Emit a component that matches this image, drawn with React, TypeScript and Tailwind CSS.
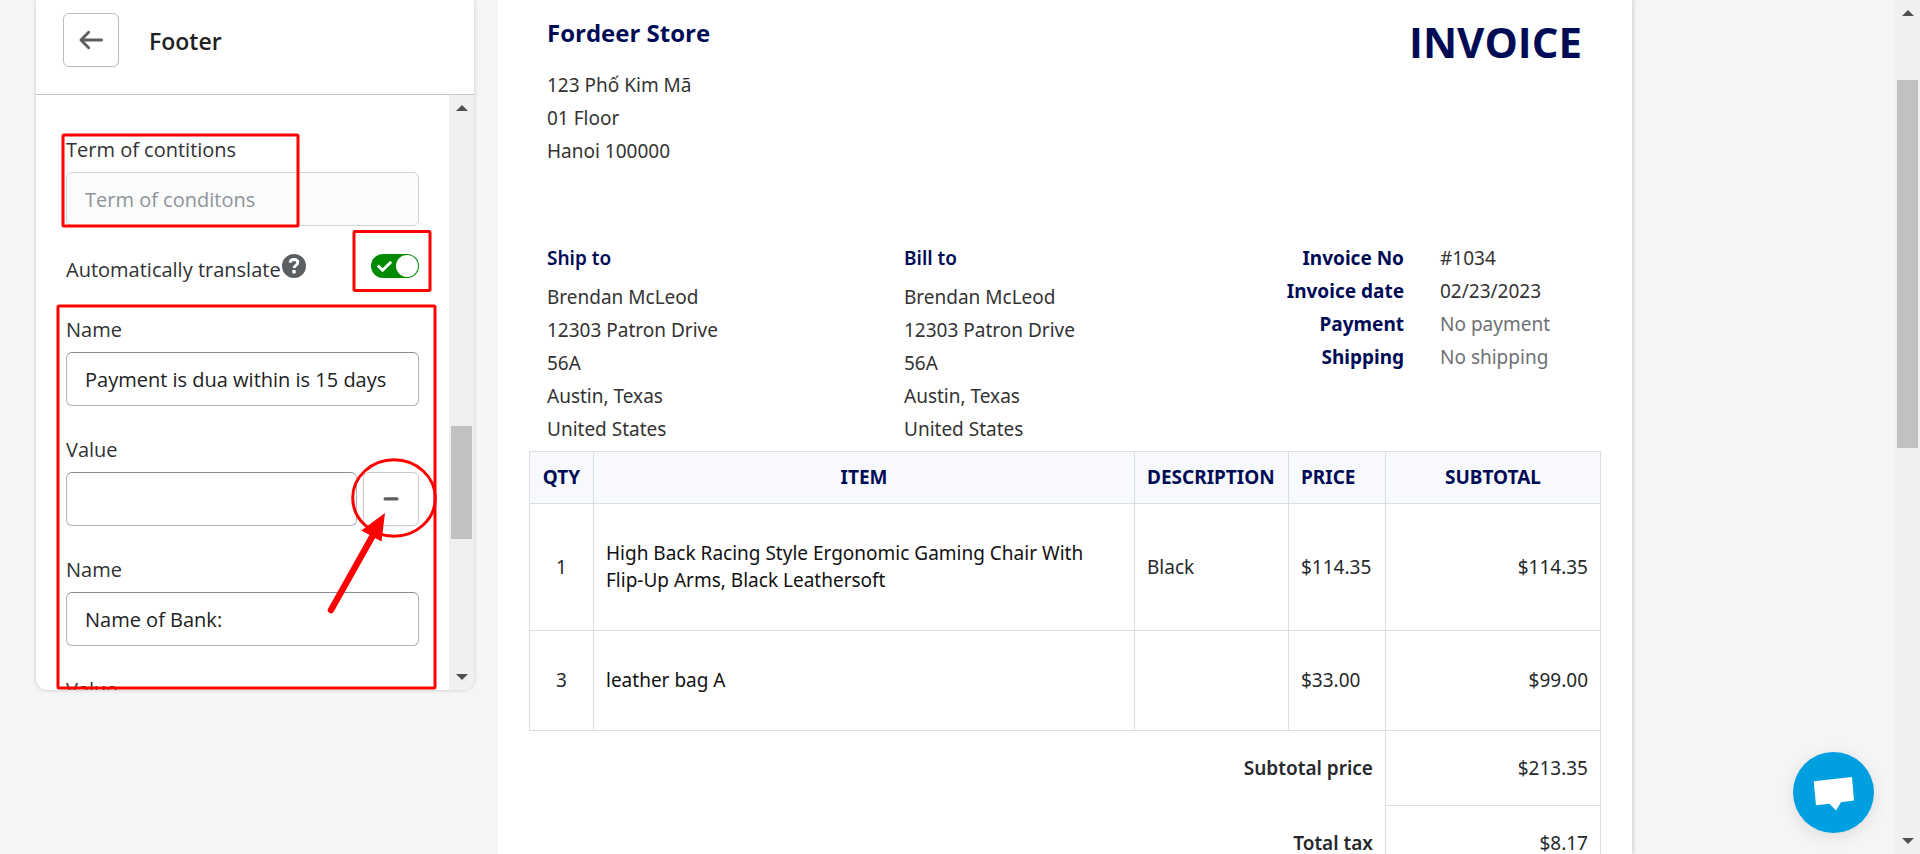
import { useId, useState } from "react";
import { FaCheck } from "react-icons/fa";

const SHIP_LINES = ["Brendan McLeod", "12303 Patron Drive", "56A", "Austin, Texas", "United States"];
const STORE_LINES = ["123 Phố Kim Mã", "01 Floor", "Hanoi 100000"];
const META = [
  { label: "Invoice No", value: "#1034", muted: false },
  { label: "Invoice date", value: "02/23/2023", muted: false },
  { label: "Payment", value: "No payment", muted: true },
  { label: "Shipping", value: "No shipping", muted: true },
];
const ITEMS = [
  {
    qty: "1",
    item: "High Back Racing Style Ergonomic Gaming Chair With Flip-Up Arms, Black Leathersoft",
    description: "Black",
    price: "$114.35",
    subtotal: "$114.35",
    height: "h-[127px]",
  },
  { qty: "3", item: "leather bag A", description: "", price: "$33.00", subtotal: "$99.00", height: "h-[100px]" },
];
const TOTALS = [
  { label: "Subtotal price", value: "$213.35" },
  { label: "Total tax", value: "$8.17" },
];

const INPUT =
  "h-[54px] w-full min-w-0 rounded-md border border-[#aeb4b9] border-t-[#898f94] bg-white px-[18px] text-xl text-[#202223] outline-none";

function ScrollArrow({ down = false }: { down?: boolean }) {
  return (
    <svg viewBox="0 0 12 6" className={down ? "h-[6px] w-3 rotate-180" : "h-[6px] w-3"} aria-hidden="true">
      <path d="M6 0 12 6H0Z" fill="#505050" />
    </svg>
  );
}

function Field({ label, value, removable = false }: { label: string; value: string; removable?: boolean }) {
  const id = useId();
  return (
    <div>
      <label htmlFor={id} className="mb-2 block leading-7">
        {label}
      </label>
      <div className="flex gap-[6px]">
        <input id={id} type="text" defaultValue={value} className={INPUT} />
        {removable && (
          <button
            type="button"
            aria-label="Remove"
            className="flex h-[54px] w-14 shrink-0 items-center justify-center rounded-md border border-[#c9cccf] bg-white shadow-xs"
          >
            <svg viewBox="0 0 16 4" className="h-1 w-4" aria-hidden="true">
              <rect x="0.5" y="0.3" width="15" height="3.2" rx="1.5" fill="#5c5f62" />
            </svg>
          </button>
        )}
      </div>
    </div>
  );
}

function Sidebar() {
  const [translate, setTranslate] = useState(true);
  return (
    <aside className="relative flex h-[calc(100vh-164px)] w-[438px] shrink-0 flex-col overflow-hidden rounded-b-xl bg-white text-xl text-[#303234] shadow-[0_0_4px_rgba(23,24,24,0.2)]">
      <header className="flex items-start border-b border-[#c5c8cb] px-[27px] pt-[13px] pb-[27px]">
        <button
          type="button"
          aria-label="Back"
          className="flex h-[54px] w-14 items-center justify-center rounded-md border border-[#babfc3] bg-white shadow-xs"
        >
          <svg viewBox="0 0 24 20" className="h-5 w-6" fill="none" stroke="#5c5f62" strokeWidth="2.9" strokeLinecap="round" strokeLinejoin="round" aria-hidden="true">
            <path d="M22.5 10H2M9.600 2.300 2 10l7.600 7.700" />
          </svg>
        </button>
        <h2 className="ml-[30px] pt-3 text-[23px] leading-8 font-semibold text-[#202223]">Footer</h2>
      </header>

      <div className="flex min-h-0 flex-1">
        <div className="min-w-0 flex-1 overflow-hidden pt-[41px] pr-[30px] pl-[30px]">
          <label htmlFor="terms" className="mb-2 block leading-7">
            Term of contitions
          </label>
          <input
            id="terms"
            type="text"
            disabled
            placeholder="Term of conditons"
            className="h-[54px] w-full rounded-md border border-[#d2d5d8] bg-[#fafbfb] px-[18px] text-xl placeholder:text-[#8f9499]"
          />
          <div className="flex h-[90px] items-center justify-between pb-[10px]">
            <div className="flex items-center gap-px">
              <label htmlFor="translate" className="pt-[7px] leading-7">
                Automatically translate
              </label>
              <svg viewBox="0 0 24 24" className="h-6 w-6" aria-hidden="true">
                <circle cx="12" cy="12" r="12" fill="#5c5f62" />
                <path d="M8.200 8.700c0-2 1.700-3.200 3.800-3.200s3.800 1.200 3.800 3.100c0 2.600-3.700 2.600-3.700 5.500" fill="none" stroke="#fff" strokeWidth="2.800" />
                <rect x="10.300" y="16" width="3.400" height="3.400" rx="0.600" fill="#fff" />
              </svg>
            </div>
            <label className="relative flex h-6 w-12 cursor-pointer items-center justify-between rounded-full bg-[#008a00] pr-px pl-[6px]">
              <input
                id="translate"
                type="checkbox"
                aria-label="Automatically translate"
                checked={translate}
                onChange={(e) => setTranslate(e.target.checked)}
                className="peer sr-only"
              />
              <FaCheck className="h-[15px] w-[15px] text-white" />
              <span className="h-[22px] w-[22px] rounded-full bg-white" />
            </label>
          </div>
          <div className="flex flex-col gap-[30px]">
            <Field label="Name" value="Payment is dua within is 15 days" />
            <Field label="Value" value="" removable />
            <Field label="Name" value="Name of Bank:" />
            <Field label="Value" value="" removable />
          </div>
        </div>
        <div className="flex w-[25px] shrink-0 flex-col items-center bg-[#f0f0f0] py-[10px]" aria-hidden="true">
          <ScrollArrow />
          <div className="flex min-h-0 w-[21px] flex-1 flex-col">
            <div className="h-[56%]" />
            <div className="h-[113px] bg-[#c1c1c1]" />
          </div>
          <ScrollArrow down />
        </div>
      </div>
    </aside>
  );
}

/** Hand-drawn guide marks laid over the settings panel. */
function Annotations() {
  return (
    <svg className="pointer-events-none absolute top-0 left-0 h-[700px] w-[480px]" viewBox="0 0 480 700" fill="none" stroke="#ff0000" strokeWidth="3" aria-hidden="true">
      <rect x="63" y="135" width="235" height="91" rx="1" />
      <rect x="354" y="231.500" width="76" height="59" rx="1" />
      <rect x="58" y="306" width="377" height="382" rx="1" />
      <ellipse cx="394" cy="498" rx="41.300" ry="38.200" />
      <path d="M331 610 372 537" strokeWidth="6.500" strokeLinecap="round" />
      <path d="M385 513 361.300 530.600 381.500 541.500Z" fill="#ff0000" stroke="none" />
    </svg>
  );
}

function Address({ title }: { title: string }) {
  return (
    <div className="w-[357px] shrink leading-[33px]">
      <h3 className="mb-[6px] font-semibold text-[#000b56]">{title}</h3>
      {SHIP_LINES.map((line) => (
        <p key={line}>{line}</p>
      ))}
    </div>
  );
}

function Invoice() {
  return (
    <main className="min-w-0 max-w-[1134px] flex-1 overflow-hidden bg-white px-[31px] font-['Noto_Sans','Open_Sans',sans-serif] text-[19px] text-[#333] shadow-[2px_0_3px_rgba(23,24,24,0.12)]">
      <div className="flex justify-between pt-[15px] pr-[19px] pl-[18px] font-['Open_Sans','Noto_Sans',sans-serif]">
        <div>
          <h2 className="mb-[18px] text-2xl leading-9 font-bold text-[#000b56]">Fordeer Store</h2>
          {STORE_LINES.map((line) => (
            <p key={line} className="font-['Noto_Sans','Open_Sans',sans-serif] leading-[33px]">
              {line}
            </p>
          ))}
        </div>
        <h1 className="text-[42px] leading-[54px] font-bold text-[#000b56]">INVOICE</h1>
      </div>

      <div className="mt-[74px] flex pl-[18px]">
        <Address title="Ship to" />
        <Address title="Bill to" />
        <dl className="grid flex-1 grid-cols-[143px_1fr] content-start gap-x-9 leading-[33px]">
          {META.map((m) => (
            <div key={m.label} className="contents">
              <dt className="text-right font-bold whitespace-nowrap text-[#000b56]">{m.label}</dt>
              <dd className={m.muted ? "text-[#6d7175]" : ""}>{m.value}</dd>
            </div>
          ))}
        </dl>
      </div>

      <table className="mt-[5px] w-full table-fixed border-collapse text-[#26292c]">
        <colgroup>
          <col className="w-16" />
          <col />
          <col className="w-[154px]" />
          <col className="w-[97px]" />
          <col className="w-[215px]" />
        </colgroup>
        <thead>
          <tr className="h-[52px] bg-[#f8f9fc] text-[#000b56] [&>th]:border [&>th]:border-[#dadde1] [&>th]:font-bold">
            <th>QTY</th>
            <th>ITEM</th>
            <th className="px-3 text-left">DESCRIPTION</th>
            <th className="px-3 text-left">PRICE</th>
            <th>SUBTOTAL</th>
          </tr>
        </thead>
        <tbody>
          {ITEMS.map((row) => (
            <tr key={row.item} className="[&>td]:border [&>td]:border-[#dadde1] [&>td]:px-3">
              <td className={`${row.height} text-center`}>{row.qty}</td>
              <td className="leading-[27px] text-[#111]">
                <p className="max-w-[500px]">{row.item}</p>
              </td>
              <td>{row.description}</td>
              <td>{row.price}</td>
              <td className="text-right">{row.subtotal}</td>
            </tr>
          ))}
          {TOTALS.map((row) => (
            <tr key={row.label} className="h-[75px]">
              <th colSpan={4} className="px-3 text-right font-semibold">
                {row.label}
              </th>
              <td className="border border-[#dadde1] px-3 text-right">{row.value}</td>
            </tr>
          ))}
        </tbody>
      </table>
    </main>
  );
}

export default function App() {
  return (
    <div className="relative flex h-screen overflow-hidden bg-[#f5f5f5] font-['Open_Sans','Noto_Sans',sans-serif]">
      <div className="flex min-w-0 flex-1 gap-6 pl-9">
        <Sidebar />
        <Invoice />
      </div>
      <div className="flex w-[25px] shrink-0 flex-col items-center bg-[#f0f0f0] py-[10px]" aria-hidden="true">
        <ScrollArrow />
        <div className="flex w-[21px] flex-1 flex-col pt-16">
          <div className="h-[368px] bg-[#c1c1c1]" />
        </div>
        <ScrollArrow down />
      </div>
      <Annotations />
      <button
        type="button"
        aria-label="Open chat"
        className="absolute right-[46px] bottom-[21px] h-[81px] w-[81px] rounded-full bg-[#009fe0] shadow-[0_4px_16px_rgba(0,0,0,0.1)]"
      >
        <svg viewBox="0 0 81 81" aria-hidden="true">
          <path d="M20.700 29.300 59 25 61 48.500 48 50.300 43 58.600 36.500 51.700 23 53.300Z" fill="#fff" />
        </svg>
      </button>
    </div>
  );
}
